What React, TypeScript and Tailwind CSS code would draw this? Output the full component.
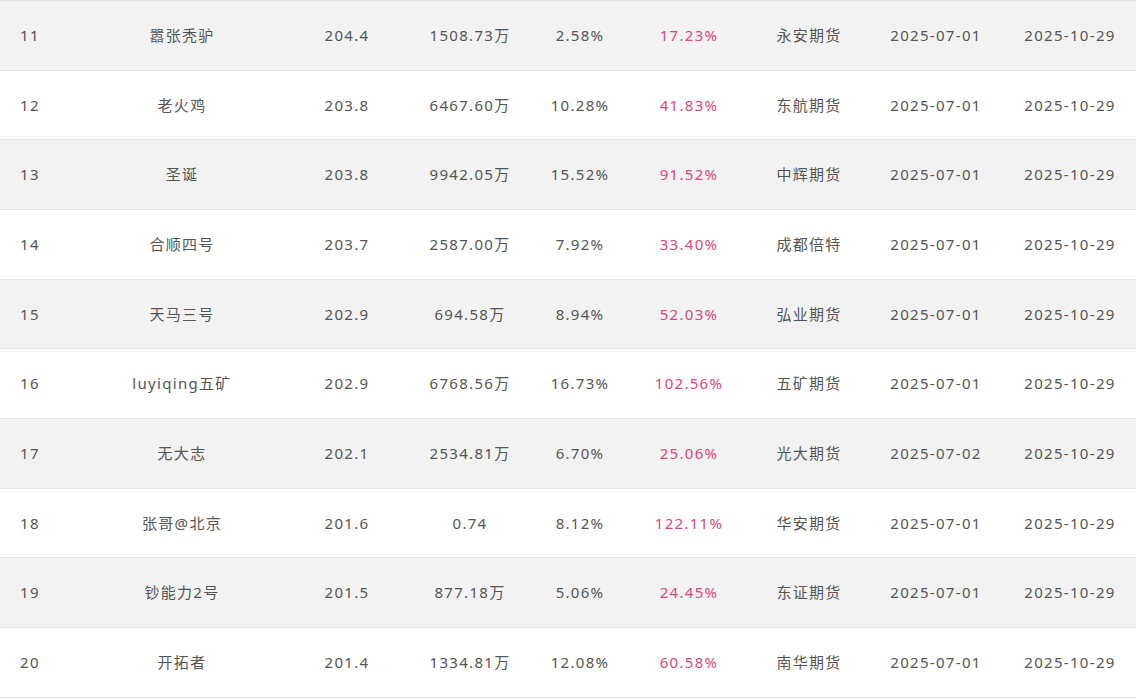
const rows = [
  { rank: 11, name: '嚣张秃驴', score: '204.4', equity: '1508.73万', drawdown: '2.58%', ret: '17.23%', broker: '永安期货', start: '2025-07-01', end: '2025-10-29' },
  { rank: 12, name: '老火鸡', score: '203.8', equity: '6467.60万', drawdown: '10.28%', ret: '41.83%', broker: '东航期货', start: '2025-07-01', end: '2025-10-29' },
  { rank: 13, name: '圣诞', score: '203.8', equity: '9942.05万', drawdown: '15.52%', ret: '91.52%', broker: '中辉期货', start: '2025-07-01', end: '2025-10-29' },
  { rank: 14, name: '合顺四号', score: '203.7', equity: '2587.00万', drawdown: '7.92%', ret: '33.40%', broker: '成都倍特', start: '2025-07-01', end: '2025-10-29' },
  { rank: 15, name: '天马三号', score: '202.9', equity: '694.58万', drawdown: '8.94%', ret: '52.03%', broker: '弘业期货', start: '2025-07-01', end: '2025-10-29' },
  { rank: 16, name: 'luyiqing五矿', score: '202.9', equity: '6768.56万', drawdown: '16.73%', ret: '102.56%', broker: '五矿期货', start: '2025-07-01', end: '2025-10-29' },
  { rank: 17, name: '无大志', score: '202.1', equity: '2534.81万', drawdown: '6.70%', ret: '25.06%', broker: '光大期货', start: '2025-07-02', end: '2025-10-29' },
  { rank: 18, name: '张哥@北京', score: '201.6', equity: '0.74', drawdown: '8.12%', ret: '122.11%', broker: '华安期货', start: '2025-07-01', end: '2025-10-29' },
  { rank: 19, name: '钞能力2号', score: '201.5', equity: '877.18万', drawdown: '5.06%', ret: '24.45%', broker: '东证期货', start: '2025-07-01', end: '2025-10-29' },
  { rank: 20, name: '开拓者', score: '201.4', equity: '1334.81万', drawdown: '12.08%', ret: '60.58%', broker: '南华期货', start: '2025-07-01', end: '2025-10-29' },
];

export default function App() {
  return (
    <div
      className="w-[1136px] h-[699px] overflow-hidden bg-white text-[15px] tracking-[1.3px] text-[#555]"
      style={{ fontFamily: '"Noto Sans", "Noto Sans CJK SC", sans-serif' }}
    >
      <div className="border-t border-[#e4e4e4]">
        {rows.map((r, i) => (
          <div
            key={r.rank}
            className={`grid grid-cols-[62px_240px_90px_156px_64px_154px_86px_168px_100px_1fr] items-center h-[69.67px] border-b border-[#e4e4e4] ${
              i % 2 === 0 ? 'bg-[#f2f2f2]' : 'bg-white'
            }`}
          >
            <div className="pl-5 whitespace-nowrap">{r.rank}</div>
            <div className="text-center whitespace-nowrap">{r.name}</div>
            <div className="text-center whitespace-nowrap">{r.score}</div>
            <div className="text-center whitespace-nowrap">{r.equity}</div>
            <div className="flex justify-center whitespace-nowrap">{r.drawdown}</div>
            <div className="text-center whitespace-nowrap text-[#dc4682]">{r.ret}</div>
            <div className="flex justify-center whitespace-nowrap">{r.broker}</div>
            <div className="text-center whitespace-nowrap">{r.start}</div>
            <div className="text-center whitespace-nowrap">{r.end}</div>
            <div />
          </div>
        ))}
      </div>
    </div>
  );
}
